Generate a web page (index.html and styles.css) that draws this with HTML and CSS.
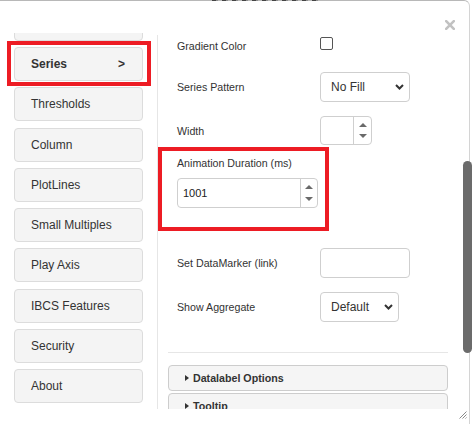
FILE: index.html
```html
<!DOCTYPE html>
<html lang="en">
<head>
<meta charset="utf-8">
<title>Series settings</title>
<link rel="stylesheet" href="styles.css">
</head>
<body>
<div class="modal">
  <div class="title-edge"></div>
  <div class="modal-header">
    <button class="close" aria-label="Close">
      <svg width="10" height="10" viewBox="0 0 10 10"><path d="M1.2 1.2L8.8 8.8M8.8 1.2L1.2 8.8" stroke="#c2c2c2" stroke-width="2.6" stroke-linecap="square"/></svg>
    </button>
  </div>
  <div class="modal-body">
    <nav class="sidebar">
      <ul class="tabs">
        <li class="tab" aria-hidden="true"></li>
        <li class="tab active"><span>Series</span><span>&gt;</span></li>
        <li class="tab">Thresholds</li>
        <li class="tab">Column</li>
        <li class="tab">PlotLines</li>
        <li class="tab">Small Multiples</li>
        <li class="tab">Play Axis</li>
        <li class="tab">IBCS Features</li>
        <li class="tab">Security</li>
        <li class="tab">About</li>
      </ul>
    </nav>
    <section class="panel">
      <div class="row row-check">
        <label>Gradient Color</label>
        <input type="checkbox" class="check">
      </div>
      <div class="row row-pattern">
        <label>Series Pattern</label>
        <div class="select sel-pattern">
          <select><option>No Fill</option></select>
          <svg class="chev" width="9" height="6" viewBox="0 0 9 6"><path d="M1 1L4.5 4.5L8 1" fill="none" stroke="#333" stroke-width="2"/></svg>
        </div>
      </div>
      <div class="row row-width">
        <label>Width</label>
        <div class="num num-small">
          <input type="text" value="">
          <div class="spin"><span class="up"></span><span class="down"></span></div>
        </div>
      </div>
      <div class="group">
        <label>Animation Duration (ms)</label>
        <div class="num num-wide">
          <input type="text" value="1001">
          <div class="spin"><span class="up"></span><span class="down"></span></div>
        </div>
      </div>
      <div class="row row-marker">
        <label>Set DataMarker (link)</label>
        <input type="text" class="text-input">
      </div>
      <div class="row row-agg">
        <label>Show Aggregate</label>
        <div class="select sel-agg">
          <select><option>Default</option></select>
          <svg class="chev" width="9" height="6" viewBox="0 0 9 6"><path d="M1 1L4.5 4.5L8 1" fill="none" stroke="#333" stroke-width="2"/></svg>
        </div>
      </div>
      <hr class="divider">
      <div class="acc acc-first"><span class="caret"></span>Datalabel Options</div>
      <div class="acc"><span class="caret"></span>Tooltip</div>
    </section>
  </div>
  <div class="scroll-thumb"></div>
  <svg class="resize" width="8" height="8" viewBox="0 0 8 8"><path d="M7.5 0.5L0.5 7.5M7.5 3.5L3.5 7.5M7.5 6.5L6.5 7.5" stroke="#8a8a8a" stroke-width="1"/></svg>
</div>
</body>
</html>
```
FILE: styles.css
```css
* { box-sizing: border-box; }
html, body { margin: 0; padding: 0; background: #fff; }
body {
  font-family: "Liberation Sans", Arial, sans-serif;
  color: #333;
  width: 476px;
  height: 436px;
  overflow: hidden;
}
.modal {
  position: relative;
  width: 470px;
  height: 424px;
  border-top: 1px solid #b8b8b8;
  border-right: 1px solid #d4d4d4;
  border-top-right-radius: 6px;
  display: flex;
  flex-direction: column;
  background: #fff;
}
.title-edge {
  position: absolute;
  top: -1px;
  left: 212px;
  width: 106px;
  height: 1px;
  background: repeating-linear-gradient(90deg, #444 0 4px, #8c8c8c 4px 6px, transparent 6px 10px);
}
.modal-header {
  height: 32px;
  flex: none;
  display: flex;
  justify-content: flex-end;
  align-items: flex-start;
  padding: 19px 14px 0 0;
}
.close {
  border: 0;
  background: none;
  padding: 0;
  width: 10px;
  height: 10px;
}
.close svg { display: block; }
.modal-body {
  height: 376px;
  flex: none;
  display: flex;
  overflow: hidden;
}
.sidebar {
  width: 157px;
  flex: none;
  padding-left: 14px;
  overflow: hidden;
}
.tabs {
  list-style: none;
  margin: -26.25px 0 0;
  padding: 0;
  width: 129px;
}
.tab {
  position: relative;
  height: 34px;
  margin-bottom: 6.25px;
  background: #f4f4f4;
  border: 1px solid #dcdcdc;
  border-radius: 4px;
  font-size: 12px;
  padding: 0 17px 0 16px;
  display: flex;
  align-items: center;
  justify-content: space-between;
}
.tab.active { font-weight: bold; }
.tab.active::after {
  content: "";
  position: absolute;
  top: -7px;
  left: -8px;
  right: -9px;
  bottom: -6px;
  border: 4px solid #ed1c24;
}
.panel {
  flex: 1;
  margin-top: 2px;
  border-left: 1px solid #e6e6e6;
  font-size: 10.667px;
  overflow: hidden;
}
.row {
  display: flex;
  align-items: center;
  padding-left: 19px;
}
.row > label { width: 143px; flex: none; }
.row-check { height: 22px; }
.check {
  appearance: none;
  -webkit-appearance: none;
  align-self: flex-start;
  margin: 2px 0 0;
  width: 13px;
  height: 13px;
  border: 1px solid #555;
  border-radius: 2px;
  background: #fff;
}
.row-pattern { margin-top: 15px; height: 30px; }
.row-width { margin-top: 14px; height: 29px; }
.row-marker { margin-top: 17px; height: 30px; }
.row-agg { margin-top: 14px; height: 30px; }
.select { position: relative; height: 30px; }
.sel-pattern { width: 90px; }
.sel-agg { width: 79px; }
.select select {
  appearance: none;
  -webkit-appearance: none;
  width: 100%;
  height: 100%;
  border: 1px solid #cfcfcf;
  border-radius: 4px;
  padding: 0 0 0 10px;
  font-family: "Liberation Sans", Arial, sans-serif;
  font-size: 12px;
  color: #333;
  background: #fff;
}
.chev {
  position: absolute;
  right: 6px;
  top: 12px;
  pointer-events: none;
}
.num {
  display: flex;
  border: 1px solid #cfcfcf;
  border-radius: 4px;
  overflow: hidden;
  background: #fff;
}
.num-small { width: 52px; height: 29px; }
.num-wide { width: 141px; height: 30px; margin-top: 9px; }
.num input {
  flex: 1;
  min-width: 0;
  border: 0;
  outline: none;
  padding: 0 0 0 5px;
  font-family: "Liberation Sans", Arial, sans-serif;
  font-size: 11px;
  color: #222;
  background: transparent;
}
.spin {
  width: 18px;
  flex: none;
  border-left: 1px solid #cfcfcf;
  display: flex;
  flex-direction: column;
}
.num-wide .spin { width: 17px; }
.spin span {
  flex: 1;
  display: flex;
  align-items: center;
  justify-content: center;
}
.spin span::before {
  content: "";
  width: 0;
  height: 0;
  border-left: 4px solid transparent;
  border-right: 4px solid transparent;
}
.spin .up::before { border-bottom: 4px solid #6a6a6a; margin-top: 2px; }
.spin .down::before { border-top: 4px solid #6a6a6a; margin-bottom: 2px; }
.group {
  margin-top: 2px;
  width: 171px;
  height: 84px;
  border: 4px solid #ed1c24;
  padding: 6px 0 0 15px;
}
.group label { display: block; line-height: 12px; }
.text-input {
  width: 90px;
  height: 30px;
  border: 1px solid #cfcfcf;
  border-radius: 4px;
  margin: 0;
  padding: 0 6px;
  background: #fff;
}
.divider {
  margin: 30px 0 0 10px;
  width: 280px;
  height: 1px;
  border: 0;
  background: #e6e6e6;
}
.acc {
  margin: 2px 0 0 10px;
  width: 280px;
  height: 26px;
  display: flex;
  align-items: center;
  padding-left: 16px;
  background: #f5f5f5;
  border: 1px solid #cdcdcd;
  border-radius: 4px;
  font-weight: bold;
  font-size: 10.667px;
  color: #333;
}
.acc-first { margin-top: 12px; }
.caret {
  width: 0;
  height: 0;
  border-left: 4px solid #333;
  border-top: 3.5px solid transparent;
  border-bottom: 3.5px solid transparent;
  margin-right: 4px;
}
.scroll-thumb {
  position: absolute;
  left: 463px;
  top: 160px;
  width: 9px;
  height: 192px;
  border-radius: 4.5px;
  background: #6b6b6b;
}
.resize {
  position: absolute;
  left: 459px;
  top: 410px;
}
```
